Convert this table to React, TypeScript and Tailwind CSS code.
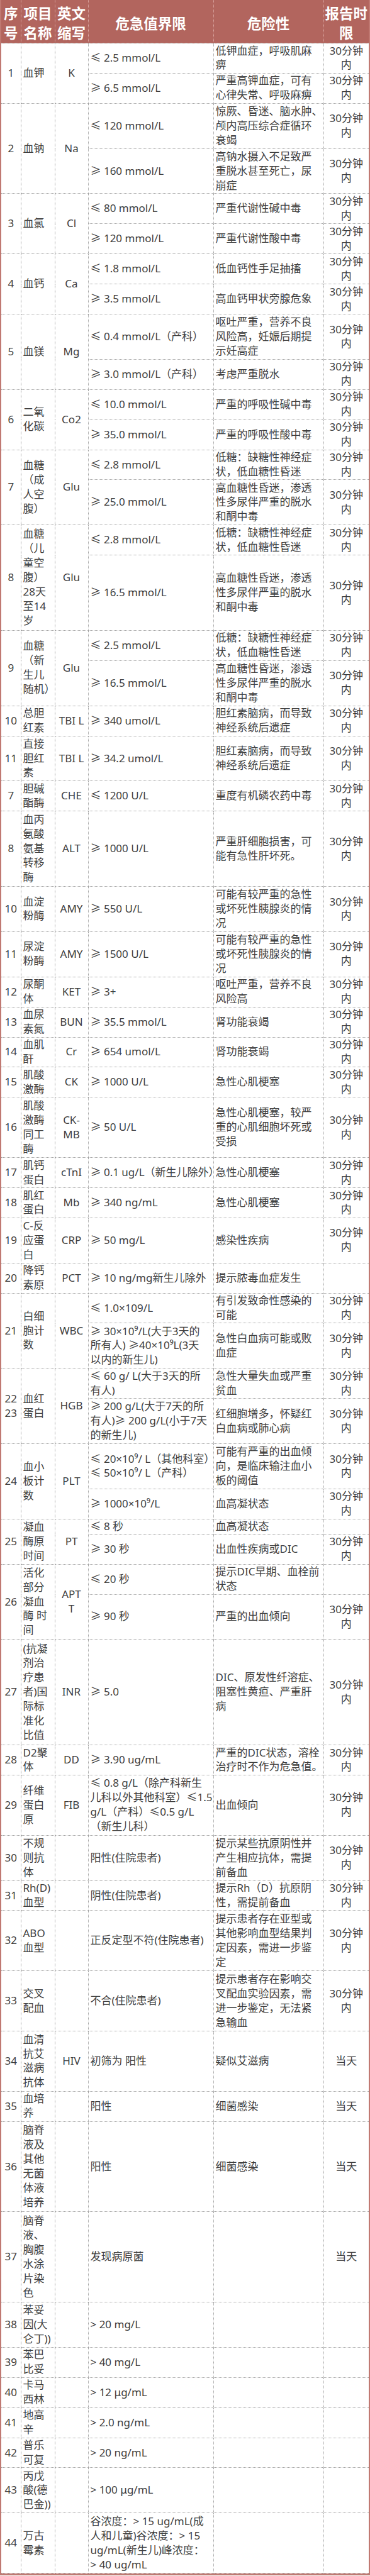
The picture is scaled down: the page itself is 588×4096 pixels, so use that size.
type Sub = { n: number; limit: string[]; risk: string[]; t: '' | 'm' | 'd' };
type Row = { no: string[]; name: string[]; abbr: string[]; subs: Sub[] };

// one text line in the reference is ~24px after scaling
const LH = 23.95;

const s = (n: number, limit: string[], risk: string[], t: '' | 'm' | 'd' = 'm'): Sub => ({ n, limit, risk, t });

const LOW_GLU = ['低糖：缺糖性神经症', '状，低血糖性昏迷'];
const HIGH_GLU = ['高血糖性昏迷，渗透', '性多尿伴严重的脱水', '和酮中毒'];
const BILI = ['胆红素脑病，而导致', '神经系统后遗症'];
const AMY = ['可能有较严重的急性', '或坏死性胰腺炎的情', '况'];

const rows: Row[] = [
  { no: ['1'], name: ['血钾'], abbr: ['K'], subs: [
    s(2, ['≤ 2.5 mmol/L'], ['低钾血症，呼吸肌麻', '痹']),
    s(2, ['≥ 6.5 mmol/L'], ['严重高钾血症，可有', '心律失常、呼吸麻痹']),
  ] },
  { no: ['2'], name: ['血钠'], abbr: ['Na'], subs: [
    s(3, ['≤ 120 mmol/L'], ['惊厥、昏迷、脑水肿、', '颅内高压综合症循环', '衰竭']),
    s(3, ['≥ 160 mmol/L'], ['高钠水摄入不足致严', '重脱水甚至死亡，尿', '崩症']),
  ] },
  { no: ['3'], name: ['血氯'], abbr: ['Cl'], subs: [
    s(2, ['≤ 80 mmol/L'], ['严重代谢性碱中毒']),
    s(2, ['≥ 120 mmol/L'], ['严重代谢性酸中毒']),
  ] },
  { no: ['4'], name: ['血钙'], abbr: ['Ca'], subs: [
    s(2, ['≤ 1.8 mmol/L'], ['低血钙性手足抽搐']),
    s(2, ['≥ 3.5 mmol/L'], ['高血钙甲状旁腺危象']),
  ] },
  { no: ['5'], name: ['血镁'], abbr: ['Mg'], subs: [
    s(3, ['≤ 0.4 mmol/L（产科）'], ['呕吐严重，营养不良', '风险高，妊娠后期提', '示妊高症']),
    s(2, ['≥ 3.0 mmol/L（产科）'], ['考虑严重脱水']),
  ] },
  { no: ['6'], name: ['二氧', '化碳'], abbr: ['Co2'], subs: [
    s(2, ['≤ 10.0 mmol/L'], ['严重的呼吸性碱中毒']),
    s(2, ['≥ 35.0 mmol/L'], ['严重的呼吸性酸中毒']),
  ] },
  { no: ['7'], name: ['血糖', '（成', '人空', '腹）'], abbr: ['Glu'], subs: [
    s(2, ['≤ 2.8 mmol/L'], LOW_GLU),
    s(3, ['≥ 25.0 mmol/L'], HIGH_GLU),
  ] },
  { no: ['8'], name: ['血糖', '（儿', '童空', '腹）', '28天', '至14', '岁'], abbr: ['Glu'], subs: [
    s(2, ['≤ 2.8 mmol/L'], LOW_GLU),
    s(5, ['≥ 16.5 mmol/L'], HIGH_GLU),
  ] },
  { no: ['9'], name: ['血糖', '（新', '生儿', '随机）'], abbr: ['Glu'], subs: [
    s(2, ['≤ 2.5 mmol/L'], LOW_GLU),
    s(3, ['≥ 16.5 mmol/L'], HIGH_GLU),
  ] },
  { no: ['10'], name: ['总胆', '红素'], abbr: ['TBI L'], subs: [s(2, ['≥ 340 umol/L'], BILI)] },
  { no: ['11'], name: ['直接', '胆红', '素'], abbr: ['TBI L'], subs: [s(3, ['≥ 34.2 umol/L'], BILI)] },
  { no: ['7'], name: ['胆碱', '酯酶'], abbr: ['CHE'], subs: [s(2, ['≤ 1200 U/L'], ['重度有机磷农药中毒'])] },
  { no: ['8'], name: ['血丙', '氨酸', '氨基', '转移', '酶'], abbr: ['ALT'], subs: [
    s(5, ['≥ 1000 U/L'], ['严重肝细胞损害，可', '能有急性肝坏死。']),
  ] },
  { no: ['10'], name: ['血淀', '粉酶'], abbr: ['AMY'], subs: [s(3, ['≥ 550 U/L'], AMY)] },
  { no: ['11'], name: ['尿淀', '粉酶'], abbr: ['AMY'], subs: [s(3, ['≥ 1500 U/L'], AMY)] },
  { no: ['12'], name: ['尿酮', '体'], abbr: ['KET'], subs: [s(2, ['≥ 3+'], ['呕吐严重，营养不良', '风险高'])] },
  { no: ['13'], name: ['血尿', '素氮'], abbr: ['BUN'], subs: [s(2, ['≥ 35.5 mmol/L'], ['肾功能衰竭'])] },
  { no: ['14'], name: ['血肌', '酐'], abbr: ['Cr'], subs: [s(2, ['≥ 654 umol/L'], ['肾功能衰竭'])] },
  { no: ['15'], name: ['肌酸', '激酶'], abbr: ['CK'], subs: [s(2, ['≥ 1000 U/L'], ['急性心肌梗塞'])] },
  { no: ['16'], name: ['肌酸', '激酶', '同工', '酶'], abbr: ['CK-', 'MB'], subs: [
    s(4, ['≥ 50 U/L'], ['急性心肌梗塞，较严', '重的心肌细胞坏死或', '受损']),
  ] },
  { no: ['17'], name: ['肌钙', '蛋白'], abbr: ['cTnI'], subs: [s(2, ['≥ 0.1 ug/L（新生儿除外）'], ['急性心肌梗塞'])] },
  { no: ['18'], name: ['肌红', '蛋白'], abbr: ['Mb'], subs: [s(2, ['≥ 340 ng/mL'], ['急性心肌梗塞'])] },
  { no: ['19'], name: ['C-反', '应蛋', '白'], abbr: ['CRP'], subs: [s(3, ['≥ 50 mg/L'], ['感染性疾病'])] },
  { no: ['20'], name: ['降钙', '素原'], abbr: ['PCT'], subs: [s(2, ['≥ 10 ng/mg新生儿除外'], ['提示脓毒血症发生'], '')] },
  { no: ['21'], name: ['白细', '胞计', '数'], abbr: ['WBC'], subs: [
    s(2, ['≤ 1.0×109/L'], ['有引发致命性感染的', '可能']),
    s(3, ['≥ 30×10⁹/L(大于3天的', '所有人) ≥40×10⁹L(3天', '以内的新生儿)'], ['急性白血病可能或败', '血症']),
  ] },
  { no: ['22', '23'], name: ['血红', '蛋白'], abbr: ['HGB'], subs: [
    s(2, ['≤ 60 g/ L(大于3天的所', '有人)'], ['急性大量失血或严重', '贫血']),
    s(3, ['≥ 200 g/L(大于7天的所', '有人)≥ 200 g/L(小于7天', '的新生儿)'], ['红细胞增多，怀疑红', '白血病或肺心病']),
  ] },
  { no: ['24'], name: ['血小', '板计', '数'], abbr: ['PLT'], subs: [
    s(3, ['≤ 20×10⁹/ L（其他科室）', '≤ 50×10⁹/ L（产科）'], ['可能有严重的出血倾', '向，是临床输注血小', '板的阈值']),
    s(2, ['≥ 1000×10⁹/L'], ['血高凝状态']),
  ] },
  { no: ['25'], name: ['凝血', '酶原', '时间'], abbr: ['PT'], subs: [
    s(1, ['≤ 8 秒'], ['血高凝状态'], ''),
    s(2, ['≥ 30 秒'], ['出血性疾病或DIC']),
  ] },
  { no: ['26'], name: ['活化', '部分', '凝血', '酶 时', '间'], abbr: ['APT', 'T'], subs: [
    s(2, ['≤ 20 秒'], ['提示DIC早期、血栓前', '状态'], ''),
    s(3, ['≥ 90 秒'], ['严重的出血倾向']),
  ] },
  { no: ['27'], name: ['(抗凝', '剂治', '疗患', '者)国', '际标', '准化', '比值'], abbr: ['INR'], subs: [
    s(7, ['≥ 5.0'], ['DIC、原发性纤溶症、', '阻塞性黄疸、严重肝', '病']),
  ] },
  { no: ['28'], name: ['D2聚', '体'], abbr: ['DD'], subs: [
    s(2, ['≥ 3.90 ug/mL'], ['严重的DIC状态，溶栓', '治疗时不作为危急值。']),
  ] },
  { no: ['29'], name: ['纤维', '蛋白', '原'], abbr: ['FIB'], subs: [
    s(4, ['≤ 0.8 g/L（除产科新生', '儿科以外其他科室）≤1.5', 'g/L（产科）≤0.5 g/L', '（新生儿科）'], ['出血倾向']),
  ] },
  { no: ['30'], name: ['不规', '则抗', '体'], abbr: [], subs: [
    s(3, ['阳性(住院患者)'], ['提示某些抗原阴性并', '产生相应抗体，需提', '前备血']),
  ] },
  { no: ['31'], name: ['Rh(D)', '血型'], abbr: [], subs: [
    s(2, ['阴性(住院患者)'], ['提示Rh（D）抗原阴', '性，需提前备血']),
  ] },
  { no: ['32'], name: ['ABO', '血型'], abbr: [], subs: [
    s(4, ['正反定型不符(住院患者)'], ['提示患者存在亚型或', '其他影响血型结果判', '定因素，需进一步鉴', '定']),
  ] },
  { no: ['33'], name: ['交叉', '配血'], abbr: [], subs: [
    s(4, ['不合(住院患者)'], ['提示患者存在影响交', '叉配血实验因素，需', '进一步鉴定，无法紧', '急输血']),
  ] },
  { no: ['34'], name: ['血清', '抗艾', '滋病', '抗体'], abbr: ['HIV'], subs: [s(4, ['初筛为 阳性'], ['疑似艾滋病'], 'd')] },
  { no: ['35'], name: ['血培', '养'], abbr: [], subs: [s(2, ['阳性'], ['细菌感染'], 'd')] },
  { no: ['36'], name: ['脑脊', '液及', '其他', '无菌', '体液', '培养'], abbr: [], subs: [s(6, ['阳性'], ['细菌感染'], 'd')] },
  { no: ['37'], name: ['脑脊', '液、', '胸腹', '水涂', '片染', '色'], abbr: [], subs: [s(6, ['发现病原菌'], [], 'd')] },
  { no: ['38'], name: ['苯妥', '因(大', '仑丁))'], abbr: [], subs: [s(3, ['> 20 mg/L'], [], '')] },
  { no: ['39'], name: ['苯巴', '比妥'], abbr: [], subs: [s(2, ['> 40 mg/L'], [], '')] },
  { no: ['40'], name: ['卡马', '西林'], abbr: [], subs: [s(2, ['> 12 μg/mL'], [], '')] },
  { no: ['41'], name: ['地高', '辛'], abbr: [], subs: [s(2, ['> 2.0 ng/mL'], [], '')] },
  { no: ['42'], name: ['普乐', '可复'], abbr: [], subs: [s(2, ['> 20 ng/mL'], [], '')] },
  { no: ['43'], name: ['丙戊', '酸(德', '巴金))'], abbr: [], subs: [s(3, ['> 100 μg/mL'], [], '')] },
  { no: ['44'], name: ['万古', '霉素'], abbr: [], subs: [
    s(4, ['谷浓度：> 15 ug/mL(成', '人和儿童)谷浓度：> 15', 'ug/mL(新生儿)峰浓度：', '> 40 ug/mL'], [], ''),
  ] },
];

function Lines({ items }: { items: string[] }) {
  return (
    <>
      {items.map((line, i) => (
        <div key={i} className="whitespace-nowrap">
          {line}
        </div>
      ))}
    </>
  );
}

const td = 'border border-dotted border-[#a3a3a3] p-0 align-middle';
const th = 'border-x border-dotted border-[#dba8a3] p-0 pt-[6px] align-middle text-center';

export default function App() {
  return (
    <div className="w-[588px] bg-white font-['Noto_Sans','Noto_Sans_CJK_SC',sans-serif]">
      <div className="border-x-2 border-b-[3px] border-[#c07972]">
        <table className="w-full table-fixed border-collapse">
          <colgroup>
            <col className="w-[31px]" />
            <col className="w-[54px]" />
            <col className="w-[53px]" />
            <col className="w-[199px]" />
            <col className="w-[175px]" />
            <col className="w-[72px]" />
          </colgroup>
          <thead>
            <tr className="h-[66px] bg-[#b2655e] text-[22.5px] font-bold leading-[31px] text-white">
              <th className={`${th} border-l-0`}><Lines items={['序', '号']} /></th>
              <th className={th}><Lines items={['项目', '名称']} /></th>
              <th className={th}><Lines items={['英文', '缩写']} /></th>
              <th className={th}>危急值界限</th>
              <th className={th}>危险性</th>
              <th className={`${th} border-r-0`}><Lines items={['报告时', '限']} /></th>
            </tr>
          </thead>
          <tbody className="text-[17px] leading-[22.9px] text-[#3e3e3e]">
            {rows.map((row, ri) =>
              row.subs.map((sub, si) => (
                <tr key={`${ri}-${si}`} style={{ height: `${sub.n * LH}px` }}>
                  {si === 0 && (
                    <>
                      <td rowSpan={row.subs.length} className={`${td} border-l-0 text-center`}>
                        <Lines items={row.no} />
                      </td>
                      <td rowSpan={row.subs.length} className={`${td} pl-[3px]`}>
                        <Lines items={row.name} />
                      </td>
                      <td rowSpan={row.subs.length} className={`${td} text-center`}>
                        <Lines items={row.abbr} />
                      </td>
                    </>
                  )}
                  <td className={`${td} pl-[3px]`}>
                    <Lines items={sub.limit} />
                  </td>
                  <td className={`${td} pl-[3px]`}>
                    <Lines items={sub.risk} />
                  </td>
                  <td className={`${td} border-r-0 text-center`}>
                    <Lines items={sub.t === 'm' ? ['30分钟', '内'] : sub.t === 'd' ? ['当天'] : []} />
                  </td>
                </tr>
              ))
            )}
          </tbody>
        </table>
      </div>
    </div>
  );
}
